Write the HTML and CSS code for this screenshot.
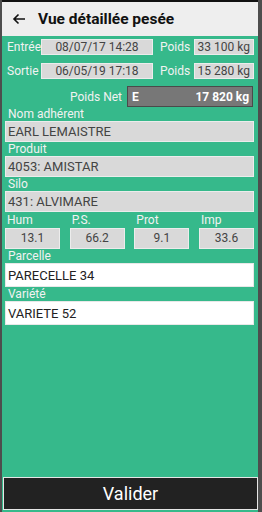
FILE: index.html
```html
<!DOCTYPE html>
<html lang="fr">
<head>
    <meta charset="UTF-8">
    <meta name="viewport" content="width=device-width, initial-scale=1.0">
    <title>Vue détaillée pesée</title>
    <link rel="stylesheet" href="styles.css">
</head>
<body>
    <div class="phone">
        <header class="topbar">
            <svg class="back" width="14" height="12" viewBox="0 0 14 12">
                <path d="M13 6H2M6.5 1.5L2 6l4.5 4.5" fill="none" stroke="#111" stroke-width="1.6"/>
            </svg>
            <h1>Vue détaillée pesée</h1>
        </header>

        <main class="content">
            <div class="row">
                <span class="lbl lbl-left">Entrée</span>
                <span class="box box-date">08/07/17 14:28</span>
                <span class="lbl lbl-poids">Poids</span>
                <span class="box box-kg">33 100 kg</span>
            </div>
            <div class="row">
                <span class="lbl lbl-left">Sortie</span>
                <span class="box box-date">06/05/19 17:18</span>
                <span class="lbl lbl-poids">Poids</span>
                <span class="box box-kg">15 280 kg</span>
            </div>
            <div class="row row-net">
                <span class="lbl">Poids Net</span>
                <div class="net">
                    <span>E</span>
                    <span>17 820 kg</span>
                </div>
            </div>

            <label class="field-lbl">Nom adhérent</label>
            <div class="box box-wide">EARL LEMAISTRE</div>

            <label class="field-lbl">Produit</label>
            <div class="box box-wide">4053: AMISTAR</div>

            <label class="field-lbl">Silo</label>
            <div class="box box-wide">431: ALVIMARE</div>

            <div class="quality">
                <div class="q"><span class="q-lbl">Hum</span><span class="box">13.1</span></div>
                <div class="q"><span class="q-lbl">P.S.</span><span class="box">66.2</span></div>
                <div class="q"><span class="q-lbl">Prot</span><span class="box">9.1</span></div>
                <div class="q"><span class="q-lbl">Imp</span><span class="box">33.6</span></div>
            </div>

            <label class="field-lbl">Parcelle</label>
            <div class="input">PARECELLE 34</div>

            <label class="field-lbl">Variété</label>
            <div class="input">VARIETE 52</div>
        </main>

        <button type="button" class="validate">Valider</button>
    </div>
</body>
</html>
```

FILE: styles.css
```css
body {
    margin: 0;
    padding: 0;
    background-color: #4d4d4d;
    font-family: Roboto, "Noto Sans", sans-serif;
}

.phone {
    height: 510px;
    margin-left: 2px;
    margin-right: 4px;
    border-top: 2px solid #111;
    background-color: #36b98b;
    display: flex;
    flex-direction: column;
}

.topbar {
    height: 34px;
    background-color: #eeeeee;
    display: flex;
    align-items: center;
    padding-left: 10px;
    box-sizing: border-box;
}

.back {
    margin-right: 12px;
}

h1 {
    margin: 0;
    font-size: 15.5px;
    font-weight: bold;
    color: #111;
}

.content {
    flex: 1;
    padding: 3px 4px 0 3px;
}

.row {
    display: flex;
    align-items: center;
    height: 16px;
    margin-bottom: 8px;
}

.lbl {
    color: #f2f2f2;
    font-size: 12px;
}

.lbl-left {
    width: 36px;
    padding-left: 2px;
    box-sizing: border-box;
}

.lbl-poids {
    width: 41px;
    padding-left: 7px;
    box-sizing: border-box;
}

.box {
    display: block;
    background-color: #d9d9d9;
    border: 1px solid #ececec;
    color: #444;
    font-size: 12px;
    box-sizing: border-box;
}

.row .box {
    height: 16px;
    line-height: 14px;
}

.box-date {
    width: 112px;
    text-align: center;
}

.box-kg {
    width: 60px;
    text-align: right;
    padding-right: 3px;
}

.row-net {
    height: 21px;
    margin-top: -1px;
    justify-content: flex-end;
    margin-right: 1px;
    margin-bottom: 0;
}

.row-net .lbl {
    margin-right: 5px;
}

.net {
    width: 126px;
    height: 21px;
    box-sizing: border-box;
    background-color: #777;
    border: 1px solid #4a4a4a;
    display: flex;
    justify-content: space-between;
    align-items: center;
    padding: 0 3px 0 4px;
    color: #fff;
    font-weight: bold;
    font-size: 12px;
}

.field-lbl {
    display: block;
    color: #f2f2f2;
    font-size: 12px;
    line-height: 14px;
    padding-left: 3px;
}

.box-wide {
    height: 21px;
    line-height: 19px;
    padding-left: 2px;
    font-size: 13px;
}

.quality {
    display: flex;
    justify-content: space-between;
}

.q {
    display: flex;
    flex-direction: column;
    width: 55px;
}

.q-lbl {
    color: #f2f2f2;
    font-size: 12px;
    line-height: 15px;
    padding-left: 2px;
    margin-top: 1px;
}

.q .box {
    height: 21px;
    line-height: 19px;
    text-align: center;
    font-size: 12px;
}

.input {
    height: 24px;
    line-height: 23px;
    background-color: #fff;
    border: 1px solid #e8e8e8;
    box-sizing: border-box;
    padding-left: 2px;
    font-size: 13px;
    color: #222;
}

.validate {
    margin: 0 0 2px 1px;
    width: 255px;
    height: 33px;
    background-color: #222;
    border: 1px solid #e6e6e6;
    color: #fff;
    font-family: Roboto, "Noto Sans", sans-serif;
    font-size: 18px;
    padding: 0;
}
```
